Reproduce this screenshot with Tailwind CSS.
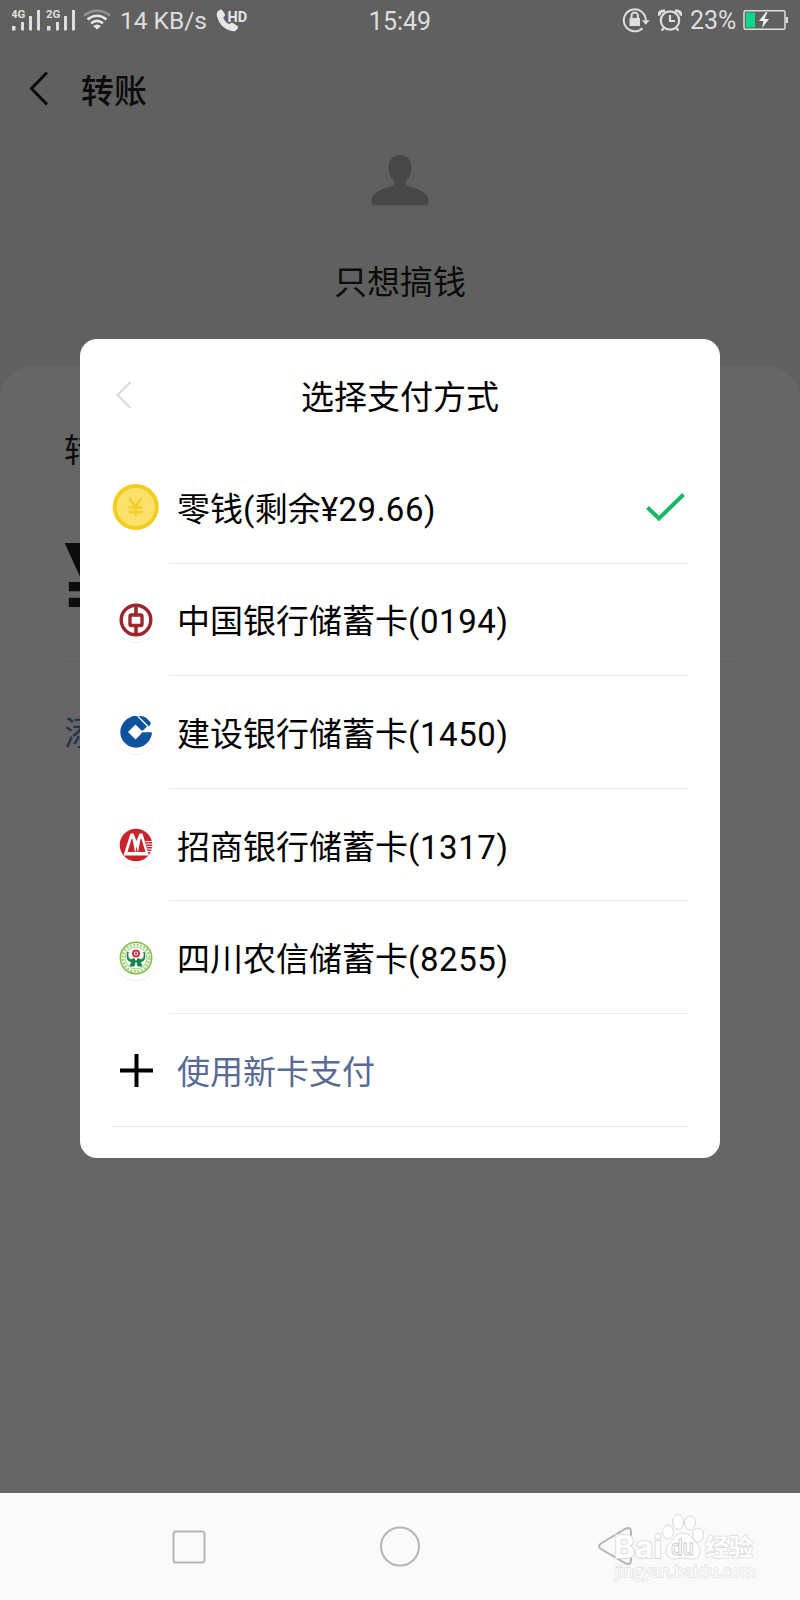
<!DOCTYPE html>
<html lang="zh-CN">
<head>
    <meta charset="UTF-8">
    <meta name="viewport" content="width=device-width, initial-scale=1.0">
    <title>选择支付方式</title>
    <script src="https://cdn.jsdelivr.net/npm/@tailwindcss/browser@4"></script>
</head>
<body class="bg-[#606060]">
<div class="relative w-[800px] h-[1600px] overflow-hidden flex flex-col bg-[#606060] text-[#0c0c0c] font-[Roboto,'Noto_Sans_CJK_SC',sans-serif]">

    <!-- Status bar -->
    <header class="h-10 shrink-0 relative flex items-center justify-between pl-3 pr-[11px] text-[25px] leading-10 text-[#dedede]">
        <div class="flex items-center">
            <svg class="w-[64px] h-10" viewBox="12 0 64 40" fill="#dedede">
                <text x="11" y="18" font-size="11.500" font-weight="700" font-family="Roboto, sans-serif">4G</text>
                <path d="M12 26h3.500v4.500H12zM21 22h3v8.500h-3zM29 16h3v14.500h-3zM37 10h3v20.500h-3z"/>
                <text x="46" y="18" font-size="11.500" font-weight="700" font-family="Roboto, sans-serif">2G</text>
                <path d="M47 26h3.500v4.500H47zM56 22h3v8.500h-3zM64 16h3v14.500h-3zM72 10h3v20.500h-3z"/>
            </svg>
            <svg class="w-7 h-10 ml-[7px]" viewBox="83 0 28 40" fill="none" stroke="#e6e6e6" stroke-width="2.600">
                <path d="M84 15.500Q97 6 110 15.500" stroke="#929292"/>
                <path d="M87.500 19.500Q97 12 106.500 19.500M91 23.200Q97 18.500 103 23.200"/>
                <path d="M93 26q4-3 8 0l-4 3.500z" fill="#e6e6e6" stroke="none"/>
            </svg>
            <span class="ml-[9px] w-[88px] pt-0.5 whitespace-nowrap text-[24.500px]">14 KB/s</span>
            <svg class="w-8 h-10 ml-2" viewBox="216 0 32 40" fill="#e6e6e6">
                <path d="M217.500 11.500l2.500-1.800q1.500-.7 2.500.8l2.300 3.500q.8 1.500-.5 2.500l-1.200 1.200q2 4.300 6 6.600l1.700-1.200q1.300-.7 2.500.2l4.200 2.700q1.200 1 .4 2.400-2.500 3.500-6.500 2.700Q220 28 217 16.500q-.6-3 .5-5z"/>
                <text x="227.500" y="21.500" font-size="14.500" font-weight="700" font-family="Roboto, sans-serif">HD</text>
            </svg>
        </div>
        <span class="absolute inset-x-0 text-center mt-[3px]">15:49</span>
        <div class="flex items-center">
            <svg class="w-7 h-10" viewBox="622 0 28 40" fill="none" stroke="#dedede" stroke-width="2">
                <path d="M642.500 28.200A11 11 0 1 1 645.800 20"/>
                <path d="M642 20.200h7.500l-3.700 4.600z" fill="#dedede" stroke="none"/>
                <path d="M629.500 18h10.500v8h-10.500z" fill="#dedede" stroke="none"/>
                <path d="M631.500 18v-2.200a3.200 3.200 0 0 1 6.400 0V18"/>
            </svg>
            <svg class="w-6 h-10 ml-2" viewBox="658 0 24 40" fill="none" stroke="#dedede" stroke-width="2.200">
                <circle cx="670" cy="20.500" r="9.200"/>
                <path d="M670 15v6h5M664 28l-2.500 2.500M676 28l2.500 2.500"/>
                <path d="M659.500 15.500q-1.500-4.500 5.500-4.800M680.500 15.500q1.500-4.500-5.500-4.800" stroke-width="3"/>
            </svg>
            <span class="ml-2 w-[47px] pt-px whitespace-nowrap">23%</span>
            <svg class="w-[46px] h-10 ml-[6px]" viewBox="743 0 46 40">
                <rect x="744" y="10.800" width="41" height="18.400" rx="1.500" fill="none" stroke="#dedede" stroke-width="1.500"/>
                <path d="M745.800 12.500h9.200v15h-9.200z" fill="#0fd889"/>
                <path d="M786 17h2v6h-2z" fill="#dedede"/>
                <path d="M766 12l-7 9h4.500l-1.500 7 7-9h-4.500l3-7z" fill="#f0f0f0"/>
            </svg>
        </div>
    </header>

    <!-- Transfer page -->
    <div class="h-[100px] shrink-0 flex items-center pl-[29px]">
        <svg class="w-5 h-9 -mt-[4px]" viewBox="0 0 20 36" fill="none" stroke="#0c0c0c" stroke-width="3">
            <path d="M18 2.500L2.500 18.500L18 34.500"/>
        </svg>
        <h1 class="ml-8 pt-[2px] text-[33px] font-medium leading-none">转账</h1>
    </div>
    <div class="h-[226px] shrink-0 flex flex-col items-center">
        <svg class="w-[58px] h-[52px] mt-[14px]" viewBox="0 0 58 52" fill="#484848">
            <path d="M29 1c-7 0-11.500 5-11.500 12.500 0 6 2.500 11.500 6 14.500 0 2.500-.5 3-3 4.200Q12 34 5 38.500 .5 41.500 .5 46v3.500q0 2 2 2h53q2 0 2-2V46q0-4.500-4.500-7.500-7-4.500-15.500-6.300c-2.500-1.200-3-1.700-3-4.200 3.500-3 6-8.500 6-14.500C40.500 6 36 1 29 1z"/>
        </svg>
        <p class="mt-[60px] text-[33px] leading-[33px]">只想搞钱</p>
    </div>
    <main class="h-[1127px] shrink-0 rounded-t-[32px] bg-[#666666] px-[62px]">
        <p class="pt-[68px] pl-[2px] text-[33px] leading-[33px]">转账金额</p>
        <div class="h-[195px] border-b border-[#5f5f5f] pt-[67px] pl-[2px] text-[112px] font-bold leading-[100px]">¥</div>
        <p class="mt-[55px] pl-[2px] text-[33px] leading-[33px] text-[#26334f]">添加说明</p>
    </main>

    <!-- Android navigation bar -->
    <nav class="relative h-[107px] shrink-0 bg-[#fafafa]">
        <svg class="w-[800px] h-[107px]" viewBox="0 1493 800 107" fill="none" stroke="#b5b5b5" stroke-width="2">
            <rect x="173.500" y="1531.500" width="31" height="31" rx="2.500"/>
            <circle cx="400" cy="1546.500" r="19"/>
            <path d="M601 1543.500l24-14.500q6-3 6 3v28q0 6-6 3l-24-14q-4-2.700 0-5.500z"/>
        </svg>
        <!-- Watermark -->
        <svg class="absolute left-[600px] top-4 w-[170px] h-[90px]" viewBox="600 1509 170 90" fill="#fefefe" stroke="#dadada" stroke-width="1" font-family="Inter, 'Noto Sans CJK SC', sans-serif">
            <text x="614" y="1558" font-size="31" font-weight="700" textLength="48" lengthAdjust="spacingAndGlyphs" stroke-width="1.800" paint-order="stroke">Bai</text>
            <ellipse cx="668" cy="1532" rx="5.500" ry="7"/>
            <ellipse cx="678" cy="1522" rx="5.500" ry="7.500"/>
            <ellipse cx="690" cy="1523" rx="5.500" ry="7"/>
            <ellipse cx="698" cy="1535" rx="5.500" ry="7"/>
            <path d="M683 1533c-8 0-9 7-14 11s-4 14 4 15c5 .5 6-1 10-1s7 1.500 11 1c7-1 8-10 3-15s-7-11-14-11z"/>
            <text x="671" y="1555" font-size="21" textLength="23" lengthAdjust="spacingAndGlyphs" font-weight="600" stroke="#cbcbcb" stroke-width=".9">du</text>
            <text x="705" y="1556" font-size="24" font-weight="700" stroke-width="1.500" paint-order="stroke">经验</text>
            <text x="615" y="1577" font-size="16" textLength="140" lengthAdjust="spacing" stroke="#e0e0e0" stroke-width="1.500" paint-order="stroke" font-family="'Open Sans', sans-serif">jingyan.baidu.com</text>
        </svg>
    </nav>

    <!-- Payment method dialog -->
    <section class="absolute left-20 top-[339px] w-[640px] h-[819px] rounded-[17px] bg-white px-8 text-[33px] text-black">
        <div class="relative h-[112px] flex items-center justify-center">
            <svg class="absolute left-1 top-[42px] w-4 h-7" viewBox="0 0 16 28" fill="none" stroke="#d8d8d8" stroke-width="2">
                <path d="M14.500 1L1.500 14L14.500 27"/>
            </svg>
            <h2 class="pt-[5px] leading-none">选择支付方式</h2>
        </div>
        <ul class="flex flex-col leading-none whitespace-nowrap">
            <li class="h-[112.600px] flex items-center gap-[9px]">
                <svg class="w-12 h-12" viewBox="0 0 48 48">
                    <circle cx="23.700" cy="24" r="21" fill="#fbe16b" stroke="#f3cd1c" stroke-width="4"/>
                    <path d="M17.500 15l6 9 6-9M23.500 24v9M16.500 24.500h14M16.500 29h14" fill="none" stroke="#f5ce26" stroke-width="2.500"/>
                </svg>
                <div class="flex-1 h-full border-b border-[#ececec] flex items-center justify-between pl-[8px] pr-[3px]">
                    <span class="pt-[5px]">零钱<span class="tracking-[0.400px]">(</span>剩余<span class="tracking-[0.500px]">¥29.66)</span></span>
                    <svg class="w-[39px] h-7" viewBox="0 0 39 28" fill="none" stroke="#14b865" stroke-width="4">
                        <path d="M1.500 14.500L13 25.500L37.500 1.500"/>
                    </svg>
                </div>
            </li>
            <li class="h-[112.600px] flex items-center gap-[9px]">
                <svg class="w-12 h-12" viewBox="0 0 48 48">
                    <circle cx="24" cy="25.500" r="21.500" fill="#efefef"/>
                    <circle cx="24" cy="24" r="22" fill="#fff"/>
                    <g fill="none" stroke="#9c262b">
                        <circle cx="24" cy="24" r="14.800" stroke-width="3.400"/>
                        <rect x="18" y="19" width="12" height="10.500" rx="1.500" stroke-width="3.400"/>
                        <path d="M24 9v9M24 30v9" stroke-width="3.600"/>
                    </g>
                </svg>
                <div class="flex-1 h-full border-b border-[#ececec] flex items-center pl-[8px] pt-[5px]">中国银行储蓄卡<span class="tracking-[0.600px]">(0194)</span></div>
            </li>
            <li class="h-[112.600px] flex items-center gap-[9px]">
                <svg class="w-12 h-12" viewBox="0 0 48 48">
                    <circle cx="24" cy="25.500" r="21.500" fill="#efefef"/>
                    <circle cx="24" cy="24" r="22" fill="#fff"/>
                    <circle cx="24" cy="24" r="15.700" fill="#0c529c"/>
                    <path d="M23.500 16.500l7.500 7.500-7.500 7.500-7.500-7.500z" fill="#fff"/>
                    <path d="M30 24.500h12v-15l-9-5-8 4 6 10z" fill="#fff"/>
                    <path d="M30 24.500h9.500q0 2-.5 4H28z" fill="#0c529c"/>
                    <path d="M18 9.500q4-2 7-1.300L35 18.500l-4 4L20 13z" fill="#0c529c"/>
                    <path d="M26.500 8q5-.5 8 2l4.500 5-2 3.500z" fill="#0c529c"/>
                </svg>
                <div class="flex-1 h-full border-b border-[#ececec] flex items-center pl-[8px] pt-[5px]">建设银行储蓄卡<span class="tracking-[0.600px]">(1450)</span></div>
            </li>
            <li class="h-[112.600px] flex items-center gap-[9px]">
                <svg class="w-12 h-12" viewBox="0 0 48 48">
                    <circle cx="24" cy="25.500" r="21.500" fill="#efefef"/>
                    <circle cx="24" cy="24" r="22" fill="#fff"/>
                    <circle cx="24" cy="24" r="16.300" fill="#c9242d"/>
                    <path d="M11.500 34.500L18.500 12.500H21.500L24.500 20L27.500 12.500H30.500L37 34.500z" fill="#fff"/>
                    <path d="M19.500 18l1 0 2.500 13h-7.500zM28.500 18h1l4 13h-7.500zM24.500 25l1 6h-2z" fill="#c9242d"/>
                    <path d="M33.500 20.500h7M34 23h6.500M35 25.500h5.500M35.500 28h5M36 30.500h4" stroke="#fff" stroke-width="1"/>
                </svg>
                <div class="flex-1 h-full border-b border-[#ececec] flex items-center pl-[8px] pt-[5px]">招商银行储蓄卡<span class="tracking-[0.600px]">(1317)</span></div>
            </li>
            <li class="h-[112.600px] flex items-center gap-[9px]">
                <svg class="w-12 h-12" viewBox="0 0 48 48">
                    <circle cx="24" cy="25.500" r="21.500" fill="#efefef"/>
                    <circle cx="24" cy="24" r="22" fill="#fff"/>
                    <g fill="none" stroke="#7fbe43">
                        <circle cx="24" cy="24" r="15.700" stroke-width="1.500"/>
                        <circle cx="24" cy="24" r="13.300" stroke-width="2.600" stroke-dasharray="2 1.500" stroke="#a3d176"/>
                        <circle cx="24" cy="24" r="11" stroke-width=".8"/>
                    </g>
                    <path d="M16 18q-1.500 7 4 8l1.500-2 2 3-1.500 5h-4l2-4q-7-1-4-10zM32 18q1.500 7-4 8l-1.500-2-2 3 1.500 5h4l-2-4q7-1 4-10z" fill="#14834a" stroke="#14834a"/>
                    <circle cx="24" cy="19.500" r="3" fill="#fff" stroke="#cf3444" stroke-width="2"/>
                    <path d="M23 18.500h2v2h-2z" fill="#cf3444"/>
                </svg>
                <div class="flex-1 h-full border-b border-[#ececec] flex items-center pl-[8px] pt-[5px]">四川农信储蓄卡<span class="tracking-[0.600px]">(8255)</span></div>
            </li>
            <li class="h-[112.600px] flex items-center gap-[17px] border-b border-[#ececec] text-[#576b95]">
                <svg class="w-12 h-12" viewBox="0 0 48 48" fill="none" stroke="#000" stroke-width="4">
                    <path d="M8 24.500h33M24.500 8v33"/>
                </svg>
                <span class="pt-[5px]">使用新卡支付</span>
            </li>
        </ul>
    </section>
</div>
</body>
</html>
